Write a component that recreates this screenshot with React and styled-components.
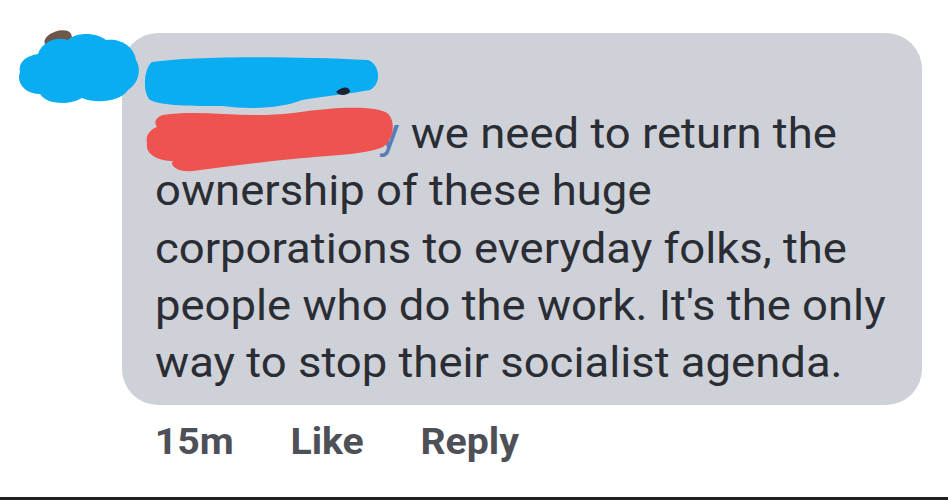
import React from 'react'
import styled, { createGlobalStyle } from 'styled-components'

const GlobalStyle = createGlobalStyle`
  html, body {
    margin: 0;
    padding: 0;
    background: #ffffff;
  }
  body {
    font-family: Roboto, "Noto Sans", "Liberation Sans", sans-serif;
  }
`

const comment = {
  lines: [
    'we need to return the',
    'ownership of these huge',
    'corporations to everyday folks, the',
    "people who do the work. It's the only",
    'way to stop their socialist agenda.',
  ],
  time: '15m',
}

function App() {
  return (
    <>
      <GlobalStyle />
      <Screen>
        <Row>
          <AvatarCol>
            <AvatarPhoto />
            <AvatarScribble viewBox="0 0 124 72">
              <path
                d="M22 22 C26 10 40 4 52 8 C60 0 80 0 90 8 C104 6 118 14 120 28 C126 38 122 52 112 58 C104 70 80 72 66 66 C52 74 30 72 24 62 C8 62 0 50 4 40 C2 30 10 24 22 22 Z"
                fill="#0aacf2"
              />
            </AvatarScribble>
          </AvatarCol>
          <CommentCol>
            <Bubble>
              <Scribble viewBox="0 0 238 56" $left={20} $top={21} $w={238} $h={56}>
                <path
                  d="M10 8 C50 2 150 2 226 6 C238 10 240 30 228 36 C206 40 184 42 160 46 C140 54 110 56 80 52 C50 52 20 52 8 46 C0 38 2 14 10 8 Z"
                  fill="#0aacf2"
                />
                <path d="M194 38 C200 32 208 32 208 38 C204 42 198 42 194 38 Z" fill="#1d2230" />
              </Scribble>
              <Scribble viewBox="0 0 252 68" $left={21} $top={72} $w={252} $h={68}>
                <path
                  d="M20 10 C60 4 100 14 150 8 C190 2 232 0 244 8 C254 16 250 36 240 42 C220 50 190 50 150 54 C110 58 80 62 50 66 C34 68 26 60 30 56 C16 56 2 50 4 38 C2 30 8 24 14 22 C10 16 14 12 20 10 Z"
                  fill="#ef5350"
                />
              </Scribble>
              <Body>
                {comment.lines.map((line, i) => (
                  <Line key={i} $indent={i === 0 ? 206 : 0}>
                    {i === 0 && <Tag>y </Tag>}
                    {line}
                  </Line>
                ))}
              </Body>
            </Bubble>
            <Actions>
              <Meta>{comment.time}</Meta>
              <Action>Like</Action>
              <Action>Reply</Action>
            </Actions>
          </CommentCol>
        </Row>
      </Screen>
    </>
  )
}

export default App

const Screen = styled.div`
  width: 948px;
  height: 500px;
  box-sizing: border-box;
  background: #ffffff;
  border-bottom: 3px solid #1e1f22;
  overflow: hidden;
`
const Row = styled.div`
  display: flex;
  padding-top: 33px;
`
const AvatarCol = styled.div`
  width: 122px;
  flex-shrink: 0;
  position: relative;
  height: 110px;
  z-index: 1;
`
const AvatarPhoto = styled.div`
  position: absolute;
  left: 44px;
  top: -2px;
  width: 28px;
  height: 16px;
  border-radius: 50% 50% 40% 40%;
  background: #6e5648;
  transform: rotate(-18deg);
`
const AvatarScribble = styled.svg`
  position: absolute;
  left: 16px;
  top: -1px;
  width: 124px;
  height: 72px;
`
const Scribble = styled.svg`
  position: absolute;
  left: ${p => p.$left}px;
  top: ${p => p.$top}px;
  width: ${p => p.$w}px;
  height: ${p => p.$h}px;
  z-index: 1;
`
const CommentCol = styled.div`
  display: flex;
  flex-direction: column;
  width: 800px;
`
const Bubble = styled.div`
  position: relative;
  background: #cfd1d8;
  border-radius: 36px;
  height: 372px;
  box-sizing: border-box;
  padding: 72px 0 0 33px;
`
const Body = styled.div`
  font-size: 42px;
  line-height: 57.3px;
  color: #2a2d33;
  transform: scaleX(1.082);
  transform-origin: left top;
`
const Line = styled.div`
  white-space: nowrap;
  padding-left: ${p => p.$indent}px;
`
const Tag = styled.span`
  color: #5b7bb8;
`
const Actions = styled.div`
  display: flex;
  align-items: baseline;
  gap: 52px;
  padding: 16px 0 0 30px;
  transform: scaleX(1.09);
  transform-origin: left top;
`
const Meta = styled.span`
  font-size: 36px;
  font-weight: 700;
  color: #4d5057;
`
const Action = styled(Meta)``
